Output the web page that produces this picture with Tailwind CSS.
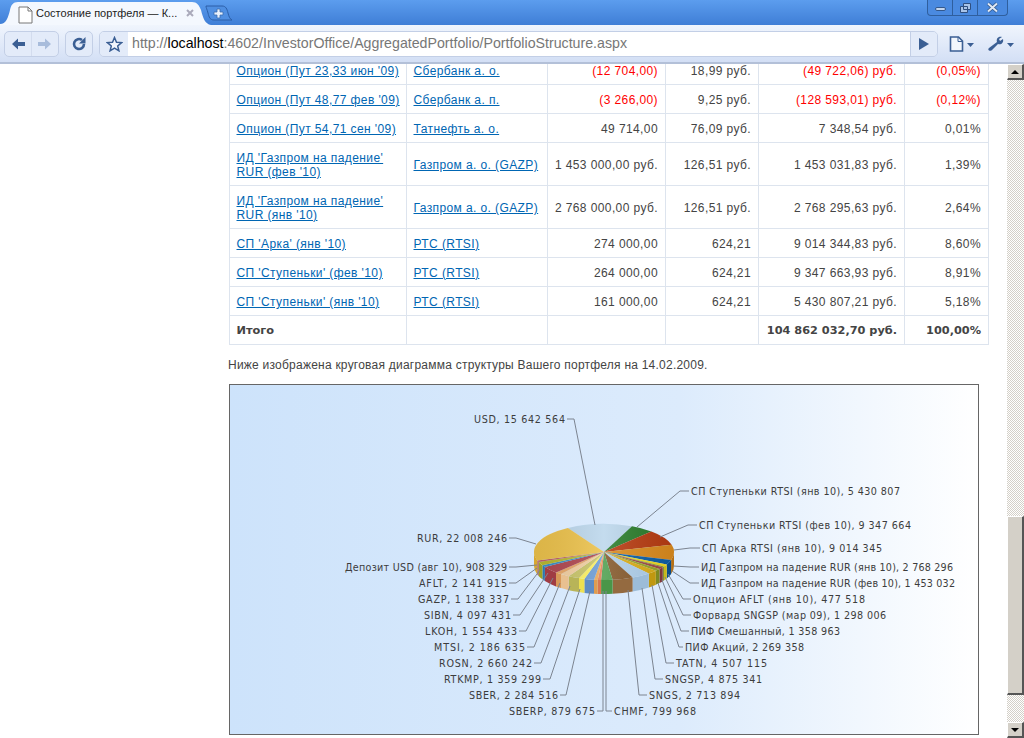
<!DOCTYPE html>
<html lang="ru">
<head>
    <meta charset="UTF-8">
    <title>Состояние портфеля</title>
    <script src="https://cdn.jsdelivr.net/npm/@tailwindcss/browser@4"></script>
</head>
<body class="w-[1024px] h-[738px] overflow-hidden bg-white font-['Liberation_Sans',sans-serif]">
    <!-- tab strip -->
    <div class="relative h-[25px] flex bg-gradient-to-b from-[#5c9dee] to-[#3f7ed6]">
        <svg class="absolute left-0 top-0" width="240" height="25">
            <path d="M0 24 C6 24 8 18 10 10 C11 5 13 2 18 2 H192 C197 2 199 5 201 10 C203 18 205 24 211 25 H0Z" fill="#f4f8fe"/>
            <path d="M206 6 H222 C226 6 227 9 228 13 C229 17 230 19 232 20 H214 C210 20 209 17 208 13 C207 9 206 8 206 6Z" fill="#4f8fe2" stroke="#2c5fa8"/>
            <path d="M217 9 h3 v3 h3 v3 h-3 v3 h-3 v-3 h-3 v-3 h3z" fill="#eaf2fc" stroke="#3a6cb0" stroke-width=".8"/>
            <path d="M19 7 h9 l4 4 v12 h-13z" fill="#fff" stroke="#777"/>
            <path d="M28 7 v4 h4" fill="none" stroke="#777"/>
            <path d="M187 10 l6 6 M193 10 l-6 6" stroke="#aab" stroke-width="2"/>
        </svg>
        <span class="relative ml-[36px] mt-[5px] text-[11px] leading-[16px] tracking-[.02px] text-[#222]">Состояние портфеля — К...</span>
        <div class="absolute right-[16px] top-0 w-[81px] h-[16px] flex border border-t-0 border-[#2f5f9e] rounded-b-[4px] bg-[#4a8ae0]">
            <div class="w-[25px] border-r border-[#2f5f9e] flex justify-center items-center">
                <div class="w-[11px] h-[4px] mt-[3px] rounded-[2px] bg-[#c4d6ee] border border-[#33588c]"></div>
            </div>
            <div class="w-[25px] border-r border-[#2f5f9e] flex justify-center items-center">
                <svg width="13" height="12"><path d="M4.5 1.5 h7 v6 h-7z M1.5 4.5 h7 v6 h-7z" fill="#a9c4e8" stroke="#2f4f80"/></svg>
            </div>
            <div class="flex-1 flex justify-center items-center">
                <svg width="13" height="11"><path d="M2 1.5 L11 9.5 M11 1.5 L2 9.5" stroke="#33588c" stroke-width="3.6"/><path d="M2 1.5 L11 9.5 M11 1.5 L2 9.5" stroke="#dfe8f5" stroke-width="2"/></svg>
            </div>
        </div>
    </div>
    <!-- toolbar -->
    <div class="h-[39px] flex items-center gap-[6px] pl-[4px] pr-[6px] border-b-2 border-[#b3c0d8] bg-gradient-to-b from-[#f0f5fd] to-[#d3dff5]">
        <div class="w-[55px] h-[26px] flex rounded-[5px] border border-[#c3cfe6] bg-[#e3ebf9]">
            <div class="w-[27px] flex justify-center items-center border-r border-[#d3dcee]">
                <svg width="16" height="14"><path d="M8 1.5 L2 7 L8 12.5 V9 H15 V5 H8Z" fill="#3b5f94"/></svg>
            </div>
            <div class="flex-1 flex justify-center items-center">
                <svg width="16" height="14"><path d="M8 1.5 L14 7 L8 12.5 V9 H1 V5 H8Z" fill="#a8bcdb"/></svg>
            </div>
        </div>
        <div class="w-[28px] h-[26px] flex justify-center items-center rounded-[5px] border border-[#c3cfe6] bg-[#e3ebf9]">
            <svg width="16" height="16"><path d="M13 8 A5 5 0 1 1 11 4" fill="none" stroke="#3b5f94" stroke-width="2.6"/><path d="M14.5 1 V7.5 H8Z" fill="#3b5f94"/></svg>
        </div>
        <div class="w-[839px] h-[26px] flex rounded-[5px] border border-[#c3cfe6] overflow-hidden">
            <div class="w-[28px] flex justify-center items-center bg-[#e3ebf9]">
                <svg width="17" height="16"><path d="M8.5 1.5 L10.5 6.2 L15.6 6.6 L11.7 9.9 L12.9 14.8 L8.5 12.2 L4.1 14.8 L5.3 9.9 L1.4 6.6 L6.5 6.2Z" fill="#f2f6fc" stroke="#3b5f94" stroke-width="1.5"/></svg>
            </div>
            <div class="flex-1 bg-white pl-[4px] text-[14.2px] leading-[23px] text-[#777] whitespace-nowrap">http://<span class="text-black">localhost</span>:4602/InvestorOffice/AggregatedPortfolio/PortfolioStructure.aspx</div>
            <div class="w-[27px] flex justify-center items-center bg-[#e3ebf9] border-l border-[#c3cfe6]">
                <svg width="10" height="12"><path d="M0 0 L10 6 L0 12Z" fill="#3b5f94"/></svg>
            </div>
        </div>
        <svg class="ml-[5px]" width="26" height="16"><path d="M1.5 1 h8 l4 4 v10 h-12z" fill="#f2f6fc" stroke="#3b5f94" stroke-width="1.6"/><path d="M9 1 v4.5 h4.5" fill="none" stroke="#3b5f94"/><path d="M18 7 h7 l-3.5 4z" fill="#3b5f94"/></svg>
        <svg class="ml-[6px]" width="28" height="16"><path d="M15 1 C11 0 9 3 10 6 L2 12 C0 14 3 16 5 14 L11 8 C14 9 17 7 16 3 L13 5 L12 3Z" fill="#3b5f94"/><path d="M20 7 h7 l-3.5 4z" fill="#3b5f94"/></svg>
    </div>

    <div class="flex h-[674px]">
        <!-- page content -->
        <div class="flex-1 overflow-hidden pl-[229px] text-[#444] text-[12px]">
            <table class="-mt-[9px] w-[760px] table-fixed border-collapse leading-[14px] tracking-[.4px] [&_td]:border [&_td]:border-[#dde4ee] [&_td]:pl-[6.5px] [&_td]:pr-[7px] [&_td]:pt-[2px] [&_td:first-child]:pr-[2px] [&_td:nth-child(n+2)]:whitespace-nowrap [&_td:nth-child(n+3)]:text-right [&_a]:text-[#0066b3] [&_a]:underline">
                <colgroup>
                    <col class="w-[177px]"><col class="w-[141px]"><col class="w-[118px]"><col class="w-[93px]"><col class="w-[146px]"><col class="w-[84px]">
                </colgroup>
                <tr class="h-[29px]"><td><a>Опцион (Пут 23,33 июн '09)</a></td><td><a>Сбербанк а. о.</a></td><td class="text-[#f00]">(12 704,00)</td><td>18,99 руб.</td><td class="text-[#f00]">(49 722,06) руб.</td><td class="text-[#f00]">(0,05%)</td></tr>
                <tr class="h-[29px]"><td><a>Опцион (Пут 48,77 фев '09)</a></td><td><a>Сбербанк а. п.</a></td><td class="text-[#f00]">(3 266,00)</td><td>9,25 руб.</td><td class="text-[#f00]">(128 593,01) руб.</td><td class="text-[#f00]">(0,12%)</td></tr>
                <tr class="h-[29px]"><td><a>Опцион (Пут 54,71 сен '09)</a></td><td><a>Татнефть а. о.</a></td><td>49 714,00</td><td>76,09 руб.</td><td>7 348,54 руб.</td><td>0,01%</td></tr>
                <tr class="h-[43px]"><td><a>ИД 'Газпром на падение' RUR (фев '10)</a></td><td><a>Газпром а. о. (GAZP)</a></td><td>1 453 000,00 руб.</td><td>126,51 руб.</td><td>1 453 031,83 руб.</td><td>1,39%</td></tr>
                <tr class="h-[43px]"><td><a>ИД 'Газпром на падение' RUR (янв '10)</a></td><td><a>Газпром а. о. (GAZP)</a></td><td>2 768 000,00 руб.</td><td>126,51 руб.</td><td>2 768 295,63 руб.</td><td>2,64%</td></tr>
                <tr class="h-[29px]"><td><a>СП 'Арка' (янв '10)</a></td><td><a>РТС (RTSI)</a></td><td>274 000,00</td><td>624,21</td><td>9 014 344,83 руб.</td><td>8,60%</td></tr>
                <tr class="h-[29px]"><td><a>СП 'Ступеньки' (фев '10)</a></td><td><a>РТС (RTSI)</a></td><td>264 000,00</td><td>624,21</td><td>9 347 663,93 руб.</td><td>8,91%</td></tr>
                <tr class="h-[29px]"><td><a>СП 'Ступеньки' (янв '10)</a></td><td><a>РТС (RTSI)</a></td><td>161 000,00</td><td>624,21</td><td>5 430 807,21 руб.</td><td>5,18%</td></tr>
                <tr class="h-[29px] font-bold font-['DejaVu_Sans',sans-serif] text-[11.3px] tracking-normal"><td>Итого</td><td></td><td></td><td></td><td>104 862 032,70 руб.</td><td>100,00%</td></tr>
            </table>
            <p class="mt-[13px] -ml-px leading-[14px] tracking-[.23px]">Ниже изображена круговая диаграмма структуры Вашего портфеля на 14.02.2009.</p>
            <div class="mt-[12px] w-[750px] h-[351px] border border-[#666] bg-gradient-to-r from-[#cde3fb] via-[#dcebfc] via-60% to-white">
                <svg id="chart" width="748" height="349" font-family="DejaVu Sans" font-size="9.6" fill="#3c3c3c"></svg>
            </div>
        </div>
        <!-- scrollbar -->
        <div class="w-[17px] flex flex-col bg-[repeating-conic-gradient(#d4d0c8_0_25%,#fff_0_50%)] bg-[length:2px_2px]">
            <div class="h-[16px] flex justify-center items-center bg-[#d4d0c8] border-t border-l border-white border-b-2 border-r-2 border-b-[#555] border-r-[#555]">
                <div class="w-0 h-0 border-x-[4px] border-x-transparent border-b-[4px] border-b-black"></div>
            </div>
            <div class="h-[436px]"></div>
            <div class="h-[179px] bg-[#d4d0c8] border-t border-l border-white border-b-2 border-r-2 border-b-[#555] border-r-[#555]"></div>
            <div class="flex-1"></div>
            <div class="h-[16px] flex justify-center items-center bg-[#d4d0c8] border-t border-l border-white border-b-2 border-r-2 border-b-[#555] border-r-[#555]">
                <div class="w-0 h-0 border-x-[4px] border-x-transparent border-t-[4px] border-t-black"></div>
            </div>
        </div>
    </div>

    <script>
    // slices go clockwise, starting from USD; coordinates are relative to the chart box
    const slices = [
        [15642564, '#bcd7ec', '#a9c8e0'], [5430807, '#2b7d2b', '#1f5f1f'], [9347664, '#b83c12', '#8f2c0c'], [9014345, '#dc8c1e', '#b87012'],
        [2768296, '#0c5fa8', '#0a4d88'], [1453032, '#f0dc20', '#c8b818'], [477518, '#8a9a20', '#707d18'], [1298006, '#a04848', '#803838'],
        [1358963, '#9aa628', '#7f8a20'], [2269358, '#dcae18', '#c09810'], [4507115, '#b0d0ec', '#9cbcd8'], [4875341, '#85592c', '#946a40'],
        [2713894, '#4f9f4f', '#4a9648'], [799968, '#e6805a', '#d87850'], [879675, '#eba858', '#e09c50'], [2284516, '#6d9cd4', '#5f8cc4'],
        [1359299, '#fbf060', '#eee050'], [2660242, '#c8c468', '#b8b458'], [2186635, '#f2cfa0', '#e8c090'], [1554433, '#e8a868', '#d89858'],
        [4097431, '#b04850', '#a03c44'], [1138337, '#3c90c8', '#2c78b0'], [2141915, '#b8b830', '#a0a020'], [908329, '#c06068', '#a85058'],
        [22008246, '#ecc24c', '#d8a830']
    ];
    // text, x, y, anchor, kink x, pie x, pie y, width of the text
    const labels = [
        ['USD, 15 642 564', 335, 34, 'end', 344, 365, 140, 91],
        ['СП Ступеньки RTSI (янв 10), 5 430 807', 461, 106, 'start', 450, 407, 142, 209],
        ['СП Ступеньки RTSI (фев 10), 9 347 664', 469, 140, 'start', 458, 430, 152, 212],
        ['СП Арка RTSI (янв 10), 9 014 345', 472, 163, 'start', 460, 444, 165, 180],
        ['ИД Газпром на падение RUR (янв 10), 2 768 296', 471, 182, 'start', 460, 443, 181, 252],
        ['ИД Газпром на падение RUR (фев 10), 1 453 032', 471, 198, 'start', 460, 442, 186, 254],
        ['Опцион AFLT (янв 10), 477 518', 463, 214, 'start', 453, 438, 189, 172],
        ['Форвард SNGSP (мар 09), 1 298 006', 463, 230, 'start', 453, 435, 192, 193],
        ['ПИФ Смешанный, 1 358 963', 461, 246, 'start', 451, 432, 195, 149],
        ['ПИФ Акций, 2 269 358', 455, 262, 'start', 449, 428, 198, 119],
        ['TATN, 4 507 115', 446, 278, 'start', 436, 422, 200, 91],
        ['SNGSP, 4 875 341', 435, 294, 'start', 425, 412, 203, 97],
        ['SNGS, 2 713 894', 419, 310, 'start', 409, 398, 205, 91],
        ['CHMF, 799 968', 384, 326, 'start', 376, 376, 206, 82],
        ['SBERP, 879 675', 365, 326, 'end', 373, 373, 206, 86],
        ['SBER, 2 284 516', 328, 310, 'end', 336, 360, 206, 89],
        ['RTKMP, 1 359 299', 311, 294, 'end', 320, 350, 204, 97],
        ['ROSN, 2 660 242', 302, 278, 'end', 311, 340, 201, 93],
        ['MTSI, 2 186 635', 295, 262, 'end', 304, 330, 198, 91],
        ['LKOH, 1 554 433', 287, 246, 'end', 296, 323, 193, 92],
        ['SIBN, 4 097 431', 281, 230, 'end', 290, 318, 188, 87],
        ['GAZP, 1 138 337', 279, 214, 'end', 288, 310, 185, 91],
        ['AFLT, 2 141 915', 277, 198, 'end', 286, 307, 183, 88],
        ['Депозит USD (авг 10), 908 329', 277, 182, 'end', 286, 307, 180, 162],
        ['RUR, 22 008 246', 277, 153, 'end', 286, 306, 159, 90]
    ];
    const cx = 374, cy = 167, rx = 70, ry = 28, depth = 14;
    const total = slices.reduce((s, x) => s + x[0], 0);
    const pt = (deg, dy = 0) => {
        const a = deg * Math.PI / 180;
        return [(cx + rx * Math.sin(a)).toFixed(1), (cy - ry * Math.cos(a) + dy).toFixed(1)];
    };
    let topFaces = '', sideFaces = '', leaders = '';
    let angle = -31;
    slices.forEach(([value, color, dark]) => {
        const end = angle + value / total * 360;
        const p1 = pt(angle), p2 = pt(end);
        const large = end - angle > 180 ? 1 : 0;
        topFaces += `<path d="M${cx} ${cy} L${p1} A${rx} ${ry} 0 ${large} 1 ${p2}Z" fill="${color}"/>`;
        // only the front half of the rim shows
        const a = Math.max(angle, 90), b = Math.min(end, 270);
        if (b > a) {
            const q1 = pt(a), q2 = pt(b), q3 = pt(b, depth), q4 = pt(a, depth);
            sideFaces += `<path d="M${q1} A${rx} ${ry} 0 0 1 ${q2} L${q3} A${rx} ${ry} 0 0 0 ${q4}Z" fill="${dark}"/>`;
        }
        angle = end;
    });
    // soft light across the top face
    const shade = `<defs><linearGradient id="shade"><stop offset="0" stop-color="#000" stop-opacity=".07"/><stop offset=".5" stop-color="#fff" stop-opacity=".12"/><stop offset="1" stop-color="#000" stop-opacity=".08"/></linearGradient></defs>` +
        `<ellipse cx="${cx}" cy="${cy}" rx="${rx}" ry="${ry}" fill="url(#shade)"/>`;
    labels.forEach(([text, x, y, anchor, kx, ex, ey, width]) => {
        leaders += `<path d="M${x + (anchor === 'end' ? 2 : -2)} ${y} H${kx} L${ex} ${ey}" fill="none" stroke="#7c8490" stroke-width="1"/>`;
        leaders += `<text x="${x}" y="${y + 3.5}" text-anchor="${anchor}" textLength="${width}">${text}</text>`;
    });
    document.getElementById('chart').innerHTML = sideFaces + topFaces + shade + leaders;
    </script>
</body>
</html>
